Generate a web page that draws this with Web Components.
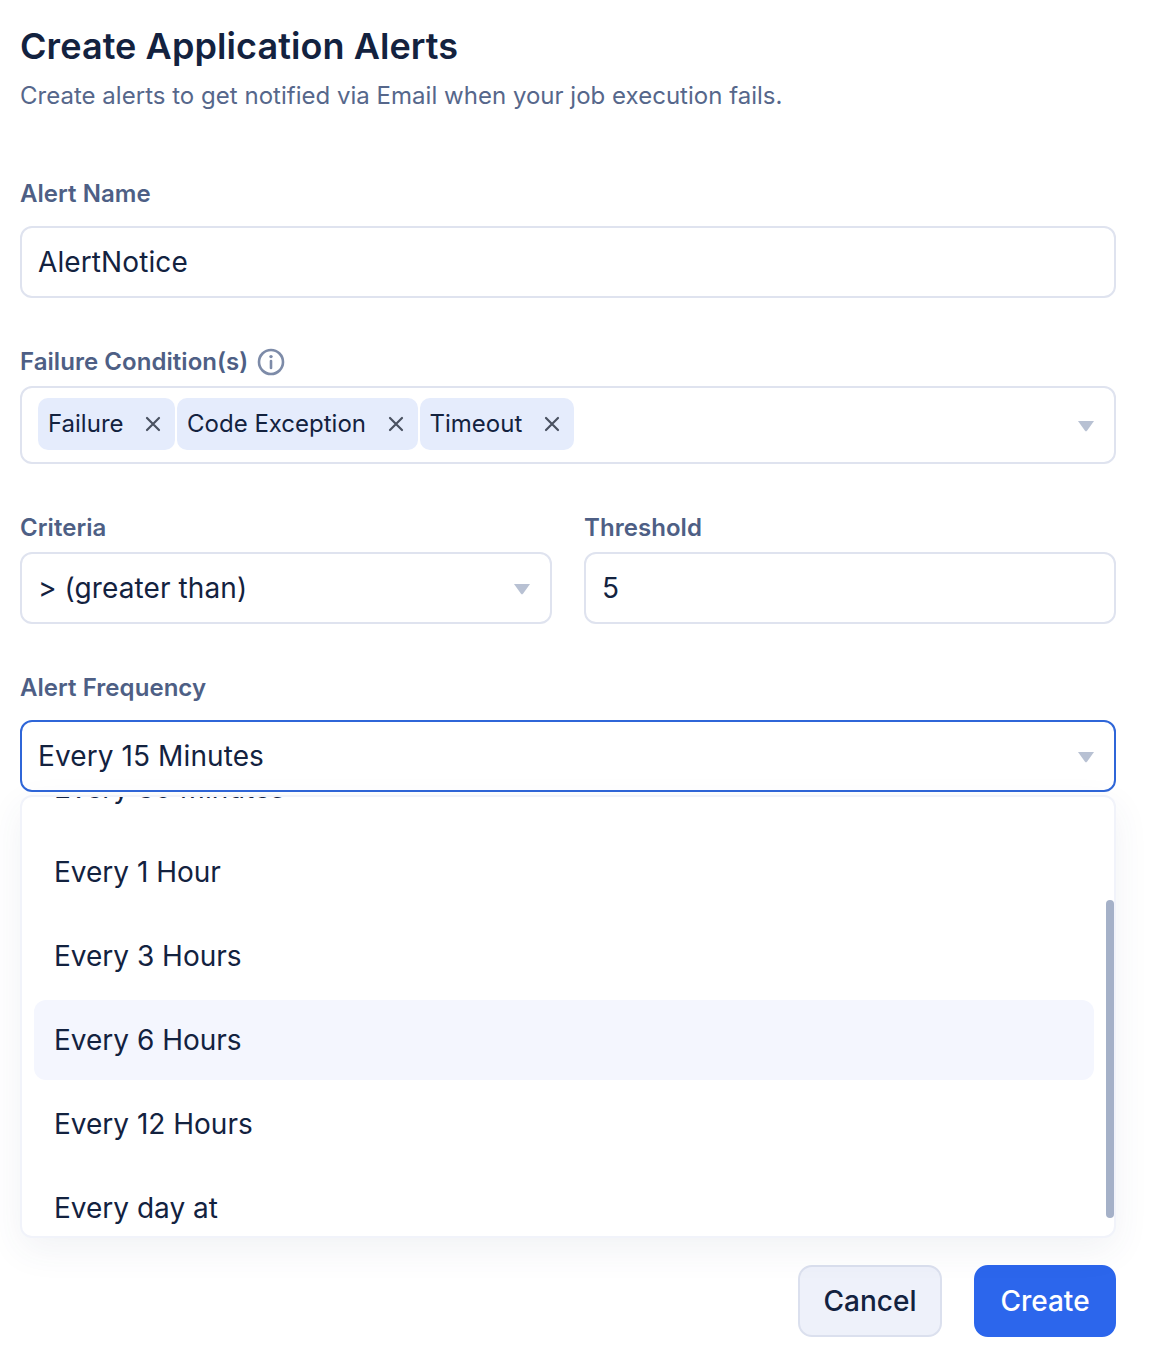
<!DOCTYPE html>
<html lang="en">
<head>
<meta charset="utf-8">
<title>Create Application Alerts</title>
<style>
html, body { margin: 0; padding: 0; background: #fff; }
body { font-family: Inter, "Liberation Sans", sans-serif; color: #13223f; }
</style>
</head>
<body>
<alert-dialog></alert-dialog>

<script>
const CARET = `<svg width="18" height="12" viewBox="0 0 18 12" aria-hidden="true"><path d="M1 1h16l-6.8 9.6a1.5 1.5 0 0 1-2.4 0z" fill="#b8c1d3"/></svg>`;

class FormField extends HTMLElement {
	constructor() {
		super();
		this.attachShadow({ mode: 'open' });
		this.shadowRoot.innerHTML = `
		<style>
		:host { display: flex; flex-direction: column; gap: var(--field-gap, 8px); }
		.label { display: flex; align-items: center; gap: 9px; font-size: 24px; line-height: 32px; font-weight: 600; letter-spacing: 0.05px; color: #4e5f85; }
		</style>
		<div class="label"><span>${this.getAttribute('label')}</span><slot name="hint"></slot></div>
		<slot></slot>`;
	}
}
customElements.define('form-field', FormField);

class InputBox extends HTMLElement {
	constructor() {
		super();
		this.attachShadow({ mode: 'open' });
		const caret = this.hasAttribute('caret') ? CARET : '';
		this.shadowRoot.innerHTML = `
		<style>
		:host { display: flex; align-items: center; justify-content: space-between; box-sizing: border-box; height: 72px; padding: 0 19px 0 16px; border: 2px solid #dfe3ef; border-radius: 12px; background: #fff; font-size: 28px; letter-spacing: 0.1px; color: #13223f; }
		:host([focused]) { border-color: #2f66d8; }
		svg { display: block; margin-top: 2px; }
		</style>
		<span><slot></slot></span>${caret}`;
	}
}
customElements.define('input-box', InputBox);

class TagChip extends HTMLElement {
	constructor() {
		super();
		this.attachShadow({ mode: 'open' });
		this.shadowRoot.innerHTML = `
		<style>
		:host { display: inline-flex; align-items: center; box-sizing: border-box; height: 52px; padding: 0 14px 0 10px; gap: 21.5px; background: #e5ecfc; border-radius: 10px; font-size: 24px; color: #13223f; }
		svg { display: block; }
		</style>
		<span><slot></slot></span>
		<svg width="16" height="16" viewBox="0 0 16 16" aria-hidden="true"><path d="M2 2l12 12M14 2L2 14" stroke="#4a5261" stroke-width="2.2" stroke-linecap="round"/></svg>`;
	}
}
customElements.define('tag-chip', TagChip);

class TagSelect extends HTMLElement {
	constructor() {
		super();
		this.attachShadow({ mode: 'open' });
		this.shadowRoot.innerHTML = `
		<style>
		:host { display: flex; align-items: center; justify-content: space-between; box-sizing: border-box; height: 78px; padding: 0 19px 0 16px; border: 2px solid #dfe3ef; border-radius: 12px; background: #fff; }
		.tags { display: flex; gap: 2px; margin-top: -3px; }
		svg { display: block; margin-top: 2px; }
		</style>
		<div class="tags"><slot></slot></div>${CARET}`;
	}
}
customElements.define('tag-select', TagSelect);

class OptionMenu extends HTMLElement {
	constructor() {
		super();
		this.attachShadow({ mode: 'open' });
		this.shadowRoot.innerHTML = `
		<style>
		:host { display: block; position: relative; box-sizing: border-box; height: 443px; border: 2px solid #f1f3fa; border-radius: 12px; background: #fff; overflow: hidden; box-shadow: 0 12px 36px rgba(60, 72, 110, 0.07); }
		.list { display: flex; flex-direction: column; gap: 4px; margin-top: -49px; padding: 0 20px 0 12px; }
		.thumb { position: absolute; right: 0; top: 103px; width: 8px; height: 318px; border-radius: 4px; background: #a5b1c8; }
		</style>
		<div class="list"><slot></slot></div>
		<div class="thumb"></div>`;
	}
}
customElements.define('option-menu', OptionMenu);

class OptionItem extends HTMLElement {
	constructor() {
		super();
		this.attachShadow({ mode: 'open' });
		this.shadowRoot.innerHTML = `
		<style>
		:host { display: flex; align-items: center; height: 80px; padding: 0 20px; border-radius: 12px; font-size: 28px; color: #13223f; }
		:host([active]) { background: #f4f6fe; }
		</style>
		<slot></slot>`;
	}
}
customElements.define('option-item', OptionItem);

class ActionButton extends HTMLElement {
	constructor() {
		super();
		this.attachShadow({ mode: 'open' });
		this.shadowRoot.innerHTML = `
		<style>
		:host { display: flex; align-items: center; justify-content: center; box-sizing: border-box; height: 72px; border-radius: 14px; font-size: 28px; font-weight: 500; border: 2px solid #dbe0ee; background: #eef1fa; color: #13223f; width: 144px; }
		:host([primary]) { background: #2c66ec; border-color: #2c66ec; color: #fff; width: 142px; }
		</style>
		<slot></slot>`;
	}
}
customElements.define('action-button', ActionButton);

class AlertDialog extends HTMLElement {
	constructor() {
		super();
		this.attachShadow({ mode: 'open' });
		this.shadowRoot.innerHTML = `
		<style>
		:host { display: block; box-sizing: border-box; width: 1153px; height: 1363px; padding: 24px 37px 0 20px; overflow: hidden; font-family: Inter, "Liberation Sans", sans-serif; }
		h1 { margin: 0 0 12px; font-size: 36px; line-height: 44px; font-weight: 600; letter-spacing: 0.08px; color: #13223f; }
		p { margin: 0 0 66px; font-size: 24px; line-height: 32px; letter-spacing: 0.02px; color: #56678b; }
		.stack { display: flex; flex-direction: column; gap: 48px; }
		.row { display: grid; grid-template-columns: 1fr 1fr; gap: 32px; }
		.first { --field-gap: 16px; }
		.freq { --field-gap: 16px; margin-top: 48px; }
		.info { display: block; }
		option-menu { margin-top: 3px; }
		.actions { display: flex; justify-content: flex-end; gap: 32px; margin-top: 27px; }
		</style>
		<h1>Create Application Alerts</h1>
		<p>Create alerts to get notified via Email when your job execution fails.</p>
		<div class="stack">
			<form-field label="Alert Name" class="first"><input-box>AlertNotice</input-box></form-field>
			<form-field label="Failure Condition(s)">
				<svg slot="hint" class="info" width="28" height="28" viewBox="0 0 28 28" aria-hidden="true"><circle cx="14" cy="14" r="12" fill="none" stroke="#7d8ba8" stroke-width="2.6"/><path d="M14 13v7" stroke="#7d8ba8" stroke-width="2.6" stroke-linecap="round"/><circle cx="14" cy="8.6" r="1.7" fill="#7d8ba8"/></svg>
				<tag-select>
					<tag-chip>Failure</tag-chip>
					<tag-chip>Code Exception</tag-chip>
					<tag-chip>Timeout</tag-chip>
				</tag-select>
			</form-field>
			<div class="row">
				<form-field label="Criteria"><input-box caret>&gt; (greater than)</input-box></form-field>
				<form-field label="Threshold"><input-box>5</input-box></form-field>
			</div>
		</div>
		<form-field label="Alert Frequency" class="freq"><input-box caret focused>Every 15 Minutes</input-box></form-field>
		<option-menu>
			<option-item>Every 30 Minutes</option-item>
			<option-item>Every 1 Hour</option-item>
			<option-item>Every 3 Hours</option-item>
			<option-item active>Every 6 Hours</option-item>
			<option-item>Every 12 Hours</option-item>
			<option-item>Every day at</option-item>
		</option-menu>
		<div class="actions">
			<action-button>Cancel</action-button>
			<action-button primary>Create</action-button>
		</div>`;
	}
}
customElements.define('alert-dialog', AlertDialog);
</script>
</body>
</html>
